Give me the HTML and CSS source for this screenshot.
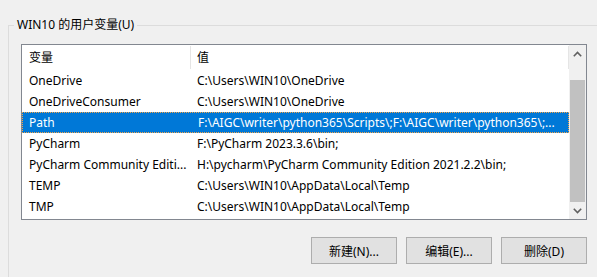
FILE: index.html
```html
<!DOCTYPE html>
<html lang="zh-CN">
<head>
<meta charset="utf-8">
<title>环境变量</title>
<link rel="stylesheet" href="styles.css">
</head>
<body>
<fieldset class="group">
  <legend class="group-title">WIN10 的用户变量(U)</legend>
  <div class="list">
    <div class="list-body">
      <div class="list-header">
        <div class="hcell col-name">变量</div>
        <div class="hcell col-value">值</div>
      </div>
      <div class="row"><div class="cell col-name">OneDrive</div><div class="cell col-value">C:\Users\WIN10\OneDrive</div></div>
      <div class="row"><div class="cell col-name">OneDriveConsumer</div><div class="cell col-value">C:\Users\WIN10\OneDrive</div></div>
      <div class="row selected"><div class="cell col-name">Path</div><div class="cell col-value">F:\AIGC\writer\python365\Scripts\;F:\AIGC\writer\python365\;...</div></div>
      <div class="row"><div class="cell col-name">PyCharm</div><div class="cell col-value">F:\PyCharm 2023.3.6\bin;</div></div>
      <div class="row"><div class="cell col-name">PyCharm Community Editi...</div><div class="cell col-value">H:\pycharm\PyCharm Community Edition 2021.2.2\bin;</div></div>
      <div class="row"><div class="cell col-name">TEMP</div><div class="cell col-value">C:\Users\WIN10\AppData\Local\Temp</div></div>
      <div class="row"><div class="cell col-name">TMP</div><div class="cell col-value">C:\Users\WIN10\AppData\Local\Temp</div></div>
    </div>
    <div class="scrollbar">
      <div class="sb-btn">
        <svg width="9" height="6" viewBox="0 0 9 6"><path d="M0.8 5.2 L4.5 1.5 L8.2 5.2" fill="none" stroke="#606060" stroke-width="1.6"/></svg>
      </div>
      <div class="sb-track"><div class="sb-thumb"></div></div>
      <div class="sb-btn">
        <svg width="9" height="6" viewBox="0 0 9 6"><path d="M0.8 0.8 L4.5 4.5 L8.2 0.8" fill="none" stroke="#606060" stroke-width="1.6"/></svg>
      </div>
    </div>
  </div>
  <div class="buttons">
    <button class="btn" type="button">新建(N)...</button>
    <button class="btn" type="button">编辑(E)...</button>
    <button class="btn" type="button">删除(D)</button>
  </div>
</fieldset>
</body>
</html>
```
FILE: styles.css
```css
html, body {
  margin: 0;
  padding: 0;
  overflow: hidden;
  height: 100%;
}
body {
  background: #f0f0f0;
  font-family: "Noto Sans", "Noto Sans CJK SC", sans-serif;
  font-size: 12px;
  color: #000;
}
.group {
  margin: 17px 0 0 8px;
  padding: 0;
  min-width: 0;
  box-sizing: border-box;
  height: calc(100vh - 17px);
  border: none;
  border-top: 1px solid #dcdcdc;
  border-left: 1px solid #dcdcdc;
}
.group-title {
  margin-left: 5px;
  padding: 0 3px;
  line-height: 16px;
}
.list {
  margin: 11px 10px 0 12px;
  height: 174px;
  border: 1px solid #828790;
  background: #fff;
  display: flex;
}
.list-body {
  flex: 1;
  min-width: 0;
  overflow: hidden;
}
.list-header {
  display: flex;
  height: 25px;
  align-items: center;
}
.hcell {
  height: 23px;
  line-height: 23px;
  border-right: 1px solid #e5e5e5;
  box-sizing: border-box;
}
.col-name {
  width: 169px;
  flex: none;
  padding-left: 7px;
  box-sizing: border-box;
  white-space: nowrap;
  overflow: hidden;
}
.col-value {
  flex: 1;
  min-width: 0;
  padding-left: 6px;
  box-sizing: border-box;
  white-space: nowrap;
  overflow: hidden;
}
.row {
  display: flex;
  height: 21px;
  line-height: 21px;
  box-sizing: border-box;
}
.row.selected {
  background: #0078d7;
  color: #fff;
  border: 1px dotted #f3a54a;
  line-height: 19px;
}
.row.selected .col-name { padding-left: 6px; }
.scrollbar {
  width: 17px;
  flex: none;
  background: #f0f0f0;
  display: flex;
  flex-direction: column;
}
.sb-btn {
  height: 17px;
  flex: none;
  display: flex;
  align-items: center;
  justify-content: center;
}
.sb-track {
  flex: 1;
  display: flex;
  flex-direction: column;
  padding-top: 18px;
}
.sb-thumb {
  flex: 1;
  margin: 0 1px;
  background: #c1c1c1;
}
.buttons {
  display: flex;
  justify-content: flex-end;
  gap: 9px;
  margin: 17px 10px 0 0;
}
.btn {
  width: 86px;
  height: 27px;
  padding: 0;
  background: #e1e1e1;
  border: 1px solid #adadad;
  font-family: "Noto Sans", "Noto Sans CJK SC", sans-serif;
  font-size: 12px;
  color: #000;
}
```
